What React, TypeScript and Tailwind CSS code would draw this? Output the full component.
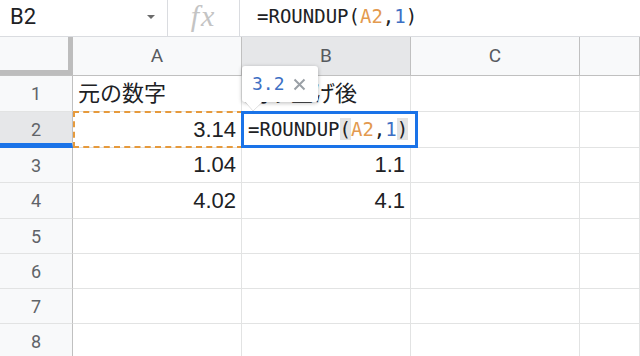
import React from 'react';

type Row = {
  n: string;
  h: string;
  a?: string;
  aRight?: boolean;
  b?: string;
  bRight?: boolean;
  sel?: boolean;
};

const rows: Row[] = [
  { n: '1', h: 'h-[36px]', a: '元の数字', b: '切り上げ後' },
  { n: '2', h: 'h-[36px]', a: '3.14', aRight: true, sel: true },
  { n: '3', h: 'h-[35px]', a: '1.04', aRight: true, b: '1.1', bRight: true },
  { n: '4', h: 'h-[36px]', a: '4.02', aRight: true, b: '4.1', bRight: true },
  { n: '5', h: 'h-[35px]' },
  { n: '6', h: 'h-[35px]' },
  { n: '7', h: 'h-[35px]' },
  { n: '8', h: 'h-[35px]' },
];

const cellText =
  "font-['Liberation_Sans','Noto_Sans_CJK_JP',sans-serif] text-[22px] leading-[26px] text-[#202124] whitespace-nowrap";
const mono = "font-['DejaVu_Sans_Mono',monospace]";

function Cell({ text, right, w }: { text?: string; right?: boolean; w: string }) {
  return (
    <div
      className={`${w} shrink-0 h-full border-r border-b border-[#e2e3e3] flex items-end pb-[4px] px-[5px] overflow-visible ${
        right ? 'justify-end' : 'justify-start'
      }`}
    >
      {text ? <span className={cellText}>{text}</span> : null}
    </div>
  );
}

function Formula({ highlightParens }: { highlightParens?: boolean }) {
  const p = highlightParens ? 'bg-[#e3e3e3]' : '';
  return (
    <span className={`${mono} text-[19px] leading-[23px] text-[#202124] whitespace-nowrap`}>
      =ROUNDUP<span className={p}>(</span>
      <span className="text-[#e39a4f]">A2</span>,<span className="text-[#3d6fc4]">1</span>
      <span className={p}>)</span>
    </span>
  );
}

export default function App() {
  return (
    <div className="w-[640px] h-[356px] overflow-hidden bg-white select-none">
      {/* formula bar */}
      <div className="h-[37px] border-b border-[#dadce0] flex items-stretch bg-white">
        <div className="w-[167px] shrink-0 flex items-center justify-between pl-[10px] pr-[12px] pb-[3px]">
          <span className="font-['Roboto',sans-serif] text-[22px] leading-[26px] text-[#202124]">B2</span>
          <span className="w-0 h-0 border-l-[4px] border-r-[4px] border-t-[4px] border-l-transparent border-r-transparent border-t-[#6b6b6b]" />
        </div>
        <div className="w-px bg-[#dadce0] shrink-0" />
        <div className="w-[71px] shrink-0 flex items-center justify-center pb-[4px]">
          <span className="font-['Liberation_Serif',serif] italic text-[30px] leading-[30px] tracking-[2px] text-[#c4c4c4]">
            fx
          </span>
        </div>
        <div className="w-px bg-[#dadce0] shrink-0" />
        <div className="flex items-center pl-[17px] pb-[4px]">
          <Formula />
        </div>
      </div>

      {/* grid */}
      <div className="relative">
        {/* column headers */}
        <div className="h-[39px] flex">
          <div className="w-[73px] shrink-0 h-full border-b border-[#c0c0c0] bg-[#f8f9fa] flex">
            <div className="w-[73px] h-[38px] border-r-[5px] border-b-[5px] border-[#bdbdbd] bg-[#f8f9fa]" />
          </div>
          {[
            { l: 'A', bg: 'bg-[#f8f9fa]', w: 'w-[169px]' },
            { l: 'B', bg: 'bg-[#e6e7e9]', w: 'w-[169px]' },
            { l: 'C', bg: 'bg-[#f8f9fa]', w: 'w-[169px]' },
            { l: '', bg: 'bg-[#f8f9fa]', w: 'w-[60px]' },
          ].map((c, i) => (
            <div
              key={i}
              className={`${c.w} ${c.bg} shrink-0 h-full border-r border-b border-[#c0c0c0] flex items-center justify-center font-['Roboto',sans-serif] text-[19px] text-[#575a5e]`}
            >
              {c.l}
            </div>
          ))}
        </div>

        {/* rows */}
        {rows.map((r) => (
          <div key={r.n} className={`${r.h} flex`}>
            <div
              className={`w-[73px] shrink-0 h-full border-r border-[#c0c0c0] flex items-center justify-center font-['Roboto',sans-serif] text-[18px] text-[#5f6368] ${
                r.sel ? 'bg-[#e6e7e9] border-b-[5px] border-b-[#1a73e8] pt-[4px]' : 'bg-[#f8f9fa] border-b border-b-[#e2e3e3]'
              }`}
            >
              {r.n}
            </div>
            <Cell w="w-[169px]" text={r.a} right={r.aRight} />
            <Cell w="w-[169px]" text={r.b} right={r.bRight} />
            <Cell w="w-[169px]" />
            <Cell w="w-[60px]" />
          </div>
        ))}

        {/* copy / reference range (dashed orange) */}
        <div className="absolute left-[73px] top-[74px] w-[170px] h-[37px] border-2 border-dashed border-[#e69a3c]" />

        {/* cell editor */}
        <div className="absolute left-[241px] top-[74px] w-[177px] h-[37px] border-[3px] border-[#1a73e8] bg-white flex items-center pl-[4px]">
          <Formula highlightParens />
        </div>

        {/* preview tooltip */}
        <div className="absolute left-[242px] top-[29px] w-[76px] h-[36px]">
          <div className="absolute inset-0 bg-white rounded-[3px] shadow-[0_1px_4px_rgba(0,0,0,0.28)]" />
          <svg className="absolute left-[2px] top-[34px]" width="22" height="13" viewBox="0 0 22 13">
            <path d="M0 0 L9 11 L20 0 Z" fill="#ffffff" />
            <path d="M0 0.5 L9 11 L20 0.5" fill="none" stroke="rgba(0,0,0,0.12)" strokeWidth="1" />
            <rect x="0" y="0" width="22" height="2" fill="#ffffff" />
          </svg>
          <div className="relative h-full flex items-center pl-[10px] gap-[8px]">
            <span className={`${mono} text-[18px] leading-[20px] text-[#3d6fc4]`}>3.2</span>
            <svg width="13" height="13" viewBox="0 0 13 13">
              <path d="M1.5 1.5 L11.5 11.5 M11.5 1.5 L1.5 11.5" stroke="#9aa0a6" strokeWidth="2" />
            </svg>
          </div>
        </div>
      </div>
    </div>
  );
}
